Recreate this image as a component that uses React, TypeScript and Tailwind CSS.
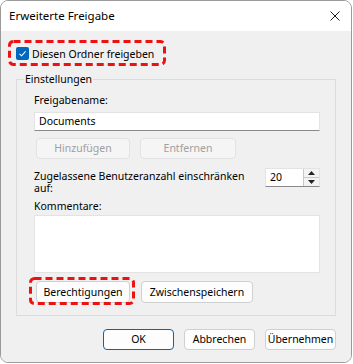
import { ReactNode } from "react";

const font = { fontFamily: '"Segoe UI", "Noto Sans", "Open Sans", sans-serif' };

// rote gestrichelte Markierung über einem Element
const Highlight = ({ className }: { className: string }) => (
  <svg className={`pointer-events-none absolute ${className}`} preserveAspectRatio="none">
    <rect
      x="1.5"
      y="1.5"
      width="calc(100% - 3px)"
      height="calc(100% - 3px)"
      rx="4"
      fill="none"
      stroke="#ee1111"
      strokeWidth="3"
      strokeDasharray="7 4"
    />
  </svg>
);

const Button = ({
  children,
  className = "",
  disabled = false,
  primary = false,
}: {
  children: ReactNode;
  className?: string;
  disabled?: boolean;
  primary?: boolean;
}) => (
  <div
    className={`flex items-center justify-center rounded-[4px] border leading-none ${
      primary
        ? "border-[#0067c0] bg-[#fdfdfd]"
        : disabled
          ? "border-[#e2e2e2] bg-[#f5f5f5]"
          : "border-[#d0d0d0] bg-[#fdfdfd]"
    } ${disabled ? "text-[#a0a0a0]" : "text-black"} ${className}`}
  >
    {children}
  </div>
);

export default function App() {
  return (
    <div className="h-[364px] w-[353px] bg-white text-[10.5px] text-black" style={font}>
      <div className="flex h-[363px] w-[352px] flex-col overflow-hidden rounded-[8px] border border-[#9a9a9a]">
        {/* Titelleiste */}
        <div className="flex h-[30px] shrink-0 items-center justify-between bg-white pl-[8px] pr-[10px]">
          <span className="text-[11.5px]">Erweiterte Freigabe</span>
          <svg width="10" height="10" viewBox="0 0 10 10" className="mr-[1px]">
            <path d="M0.5 0.5 L9.5 9.5 M9.5 0.5 L0.5 9.5" stroke="#1a1a1a" strokeWidth="1" />
          </svg>
        </div>

        <div className="flex flex-1 flex-col bg-[#f0f0f0] pt-[16px]">
          {/* Freigabe-Checkbox */}
          <div className="relative ml-[15px] flex h-[13px] items-center gap-[3px]">
            <div className="flex h-[13px] w-[13px] items-center justify-center rounded-[2px] bg-[#0067c0]">
              <svg width="9" height="9" viewBox="0 0 9 9">
                <path d="M1.5 4.8 L3.6 6.8 L7.6 2.3" fill="none" stroke="white" strokeWidth="1.1" />
              </svg>
            </div>
            <span className="leading-[16px]">Diesen Ordner freigeben</span>
            <Highlight className="-left-[8px] -top-[7px] h-[26px] w-[158px]" />
          </div>

          {/* Einstellungen */}
          <fieldset className="mx-[15px] mt-[11px] border border-[#dcdcdc] pb-[12px] pl-[7px] pr-[15px]">
            <legend className="px-[1px] leading-[16px]">Einstellungen</legend>
            <div className="flex flex-col pl-[10px]">
              <span className="mt-[5px] leading-[16px]">Freigabename:</span>
              <div className="mt-[4px] flex h-[19px] items-center border border-[#e3e3e3] border-b-[#8a8a8a] bg-white pl-[4px]">
                Documents
              </div>
              <div className="mt-[7px] flex gap-[10px] pl-[2px]">
                <Button disabled className="h-[21px] w-[94px]">Hinzufügen</Button>
                <Button disabled className="h-[21px] w-[96px]">Entfernen</Button>
              </div>
              <div className="mt-[9px] flex items-start justify-between">
                <span className="w-[220px] pt-[2px] leading-[12px]">
                  Zugelassene Benutzeranzahl einschränken auf:
                </span>
                <div className="flex h-[19px] w-[55px] border border-[#e3e3e3] border-b-[#8a8a8a] bg-white">
                  <span className="flex flex-1 items-center pl-[4px]">20</span>
                  <div className="flex w-[16px] flex-col border-l border-[#c8c8c8] bg-[#f3f3f3]">
                    <div className="flex flex-1 items-center justify-center border-b border-[#c8c8c8]">
                      <svg width="7" height="4" viewBox="0 0 7 4">
                        <path d="M0 4 L3.5 0 L7 4 Z" fill="#222" />
                      </svg>
                    </div>
                    <div className="flex flex-1 items-center justify-center">
                      <svg width="7" height="4" viewBox="0 0 7 4">
                        <path d="M0 0 L3.5 4 L7 0 Z" fill="#222" />
                      </svg>
                    </div>
                  </div>
                </div>
              </div>
              <span className="mt-[4px] leading-[16px]">Kommentare:</span>
              <div className="mt-[1px] h-[58px] border border-[#e3e3e3] bg-white" />
              <div className="mt-[8px] flex gap-[11px] pl-[2px]">
                <div className="relative">
                  <Button className="h-[22px] w-[94px]">Berechtigungen</Button>
                  <Highlight className="-left-[7px] -top-[4px] h-[28px] w-[106px]" />
                </div>
                <Button className="h-[22px] w-[112px]">Zwischenspeichern</Button>
              </div>
            </div>
          </fieldset>

          {/* Dialogschaltflächen */}
          <div className="mt-[13px] flex justify-end gap-[10px] pr-[15px]">
            <Button primary className="h-[21px] w-[71px]">OK</Button>
            <Button className="h-[21px] w-[71px]">Abbrechen</Button>
            <Button className="h-[21px] w-[71px]">Übernehmen</Button>
          </div>
        </div>
      </div>
    </div>
  );
}
